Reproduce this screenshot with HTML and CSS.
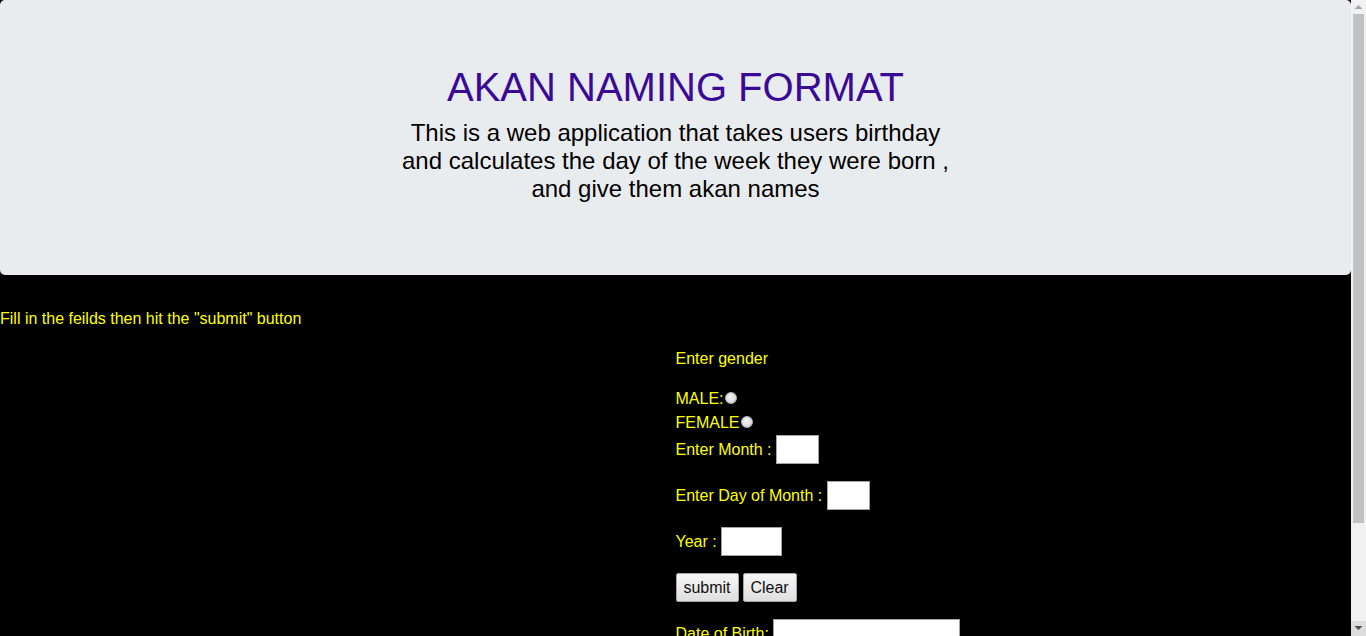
FILE: index.html
```html
<!DOCTYPE html>
<html lang="en">
<head>
<meta charset="utf-8">
<title>Akan Naming Format</title>
<link rel="stylesheet" href="styles.css">
</head>
<body>
  <header class="jumbotron">
    <h1 class="title">AKAN NAMING FORMAT</h1>
    <h4 class="subtitle">This is a web application that takes users birthday<br>and calculates the day of the week they were born ,<br>and give them akan names</h4>
  </header>
  <p class="intro">Fill in the feilds then hit the "submit" button</p>
  <form class="form">
    <p class="gender-title">Enter gender</p>
    <div class="radio-row"><label>MALE:<input class="radio" type="radio" name="gender" value="male"></label></div>
    <div class="radio-row last"><label>FEMALE<input class="radio" type="radio" name="gender" value="female"></label></div>
    <div class="field-row"><span>Enter Month :</span><input class="text-input w43" type="text"></div>
    <div class="field-row"><span>Enter Day of Month :</span><input class="text-input w43" type="text"></div>
    <div class="field-row"><span>Year :</span><input class="text-input w61" type="text"></div>
    <div class="field-row buttons"><button type="button" class="btn w63">submit</button><button type="reset" class="btn w54">Clear</button></div>
    <div class="field-row dob"><span>Date of Birth:</span><input class="text-input w187" type="text"></div>
  </form>
  <div class="scrollbar" aria-hidden="true">
    <div class="sb-up"><svg width="15" height="14" viewBox="0 0 15 14"><polygon points="3.5,9 7.5,5 11.5,9" fill="#a3a3a3"/></svg></div>
    <div class="sb-track"><div class="sb-thumb"></div></div>
    <div class="sb-down"><svg width="15" height="15" viewBox="0 0 15 15"><polygon points="3.5,5 11.5,5 7.5,9" fill="#505050"/></svg></div>
  </div>
</body>
</html>
```
FILE: styles.css
```css
html, body {
  margin: 0;
  padding: 0;
}
body {
  background: #000;
  color: #ffff00;
  font-family: "Liberation Sans", Arial, sans-serif;
  font-size: 16px;
  line-height: 1.5;
  margin-right: 15px;
}
.jumbotron {
  background: #e9ecef;
  border-radius: 5px;
  padding: 63px 32px 64px;
  margin: 0 0 32px;
  text-align: center;
  color: #000;
}
.title {
  margin: 0 0 8px;
  font-size: 40px;
  line-height: 48px;
  font-weight: 400;
  color: #390a96;
}
.subtitle {
  margin: 0 0 8px;
  font-size: 24px;
  line-height: 28px;
  font-weight: 400;
}
.intro {
  margin: 0 0 16px;
}
.form {
  margin-left: 50%;
  padding-bottom: 108px;
}
.gender-title {
  margin: 0 0 16px;
}
.radio-row {
  height: 24px;
}
.radio-row.last {
  height: 23px;
}
.radio {
  -webkit-appearance: none;
  appearance: none;
  width: 12px;
  height: 12px;
  margin: 0 0 3px 1px;
  border-radius: 50%;
  border: 1px solid #b4b4b4;
  background: radial-gradient(circle at 45% 40%, #f4f4f4 0%, #dedede 60%, #c6c6c6 100%);
  vertical-align: middle;
}
.field-row {
  display: flex;
  align-items: center;
  gap: 4.5px;
  height: 31px;
  margin-bottom: 15px;
}
.text-input {
  box-sizing: border-box;
  height: 29px;
  margin: 0;
  padding: 1px 2px;
  border: 1px solid #a3a3a3;
  background: #fff;
  font: inherit;
}
.w43 { width: 43px; }
.w61 { width: 61px; }
.w187 { width: 187px; }
.buttons {
  gap: 4px;
}
.btn {
  box-sizing: border-box;
  height: 29px;
  margin: 0;
  padding: 0;
  border: 1px solid #a6a6a6;
  border-radius: 2px;
  background: linear-gradient(#f7f7f7, #dedede);
  color: #111;
  font-family: "Liberation Sans", Arial, sans-serif;
  font-size: 16px;
}
.w63 { width: 63px; }
.w54 { width: 54px; }

.scrollbar {
  position: fixed;
  top: 0;
  right: 0;
  width: 15px;
  height: 100vh;
  background: #f1f1f1;
  display: flex;
  flex-direction: column;
}
.sb-up {
  height: 14px;
  line-height: 0;
}
.sb-track {
  flex: 1;
  padding: 0 2px;
}
.sb-thumb {
  height: 509px;
  background: #c1c1c1;
}
.sb-down {
  height: 15px;
  background: #dcdcdc;
  line-height: 0;
}
```
